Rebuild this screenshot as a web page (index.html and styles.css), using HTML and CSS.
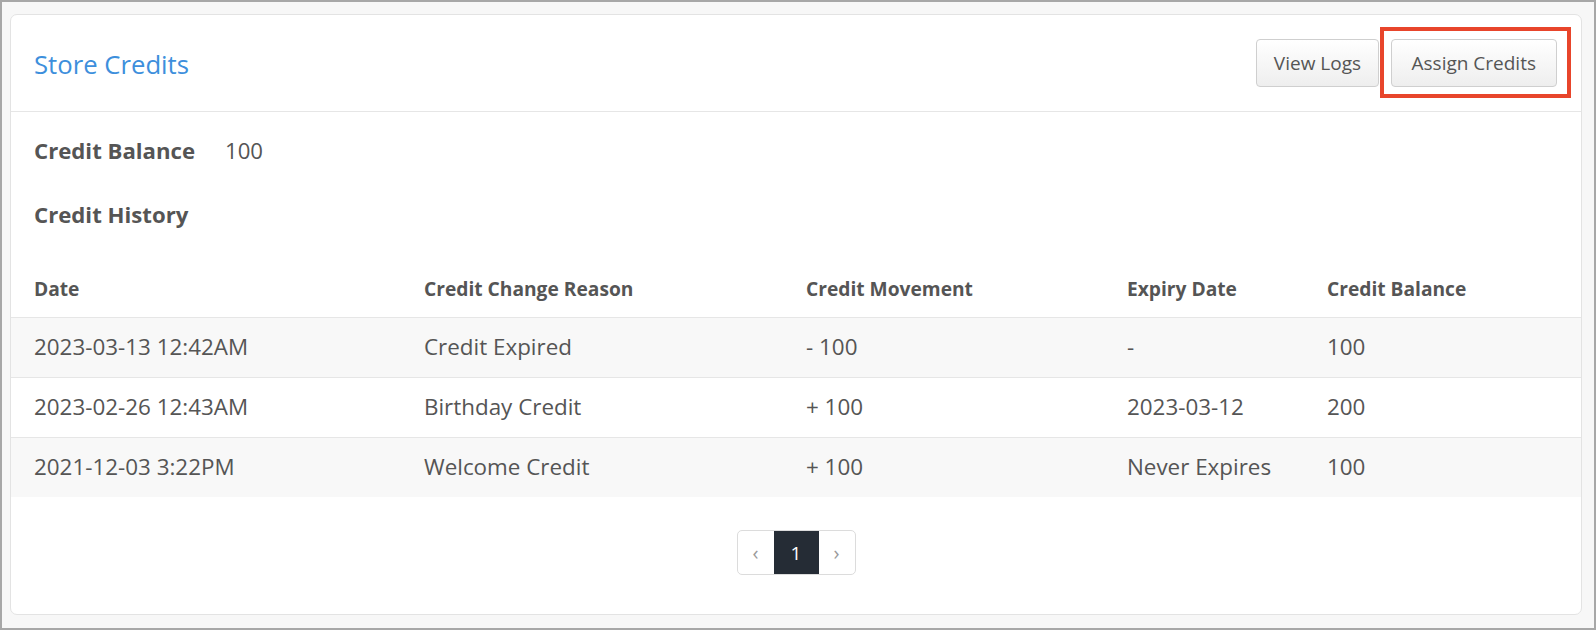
FILE: index.html
```html
<!DOCTYPE html>
<html>
<head>
<meta charset="utf-8">
<link rel="stylesheet" href="styles.css">
</head>
<body>
<div class="frame">
  <div class="card">
    <div class="card-header">
      <h1 class="title">Store Credits</h1>
      <div class="actions">
        <button class="btn">View Logs</button>
        <span class="highlight-wrap">
          <button class="btn btn-wide">Assign Credits</button>
          <span class="highlight"></span>
        </span>
      </div>
    </div>
    <div class="card-body">
      <div class="balance">
        <span class="label">Credit Balance</span>
        <span class="value">100</span>
      </div>
      <h2 class="section-title">Credit History</h2>
    </div>
    <table class="history">
      <colgroup>
        <col class="c1"><col class="c2"><col class="c3"><col class="c4"><col class="c5">
      </colgroup>
      <thead>
        <tr>
          <th>Date</th>
          <th>Credit Change Reason</th>
          <th>Credit Movement</th>
          <th>Expiry Date</th>
          <th>Credit Balance</th>
        </tr>
      </thead>
      <tbody>
        <tr>
          <td>2023-03-13 12:42AM</td>
          <td>Credit Expired</td>
          <td>- 100</td>
          <td>-</td>
          <td>100</td>
        </tr>
        <tr>
          <td>2023-02-26 12:43AM</td>
          <td>Birthday Credit</td>
          <td>+ 100</td>
          <td>2023-03-12</td>
          <td>200</td>
        </tr>
        <tr>
          <td>2021-12-03 3:22PM</td>
          <td>Welcome Credit</td>
          <td>+ 100</td>
          <td>Never Expires</td>
          <td>100</td>
        </tr>
      </tbody>
    </table>
    <div class="pager-row">
      <div class="pager">
        <span class="page nav">&#8249;</span>
        <span class="page active">1</span>
        <span class="page nav">&#8250;</span>
      </div>
    </div>
  </div>
</div>
</body>
</html>
```

FILE: styles.css
```css
* { box-sizing: border-box; }
html, body { margin: 0; padding: 0; }
body {
  font-family: "Open Sans", "Noto Sans", sans-serif;
  color: #555;
  background: #f7f7f7;
}
.frame {
  width: 1596px;
  height: 630px;
  border: 2px solid #a7a7a7;
  background: #f7f7f7;
  padding: 12px 12px 0 8px;
}
.card {
  background: #fff;
  border: 1px solid #e3e3e3;
  border-radius: 7px;
  height: 601px;
}
.card-header {
  display: flex;
  align-items: center;
  justify-content: space-between;
  height: 97px;
  padding: 0 24px 0 23px;
  border-bottom: 1px solid #e6e6e6;
}
.title {
  margin: 3px 0 0;
  font-size: 25.7px;
  font-weight: 400;
  color: #3d8fdc;
  line-height: 34px;
}
.actions {
  display: flex;
  gap: 12px;
  align-items: center;
}
.btn {
  font-family: "Open Sans", "Noto Sans", sans-serif;
  font-size: 19px;
  color: #555;
  height: 48px;
  padding: 0 16.5px;
  border: 1px solid #cfcfcf;
  border-radius: 4px;
  background: linear-gradient(#ffffff, #eeeeee);
}
.btn-wide {
  padding: 0 20px;
}
.highlight-wrap {
  position: relative;
  display: inline-flex;
}
.highlight {
  position: absolute;
  left: -11px;
  top: -12px;
  right: -14px;
  bottom: -11px;
  border: 4.5px solid #e8452b;
}
.card-body {
  padding: 24px 23px 0;
}
.balance {
  display: flex;
  align-items: center;
  line-height: 30px;
  font-size: 22.2px;
}
.label {
  font-weight: 700;
  width: 191px;
}
.section-title {
  margin: 34px 0 0;
  font-size: 22.2px;
  font-weight: 700;
  line-height: 30px;
}
.history {
  width: 100%;
  border-collapse: collapse;
  margin-top: 32px;
  table-layout: fixed;
}
.c1 { width: 390px; }
.c2 { width: 382px; }
.c3 { width: 321px; }
.c4 { width: 200px; }
.history th {
  text-align: left;
  font-size: 19.2px;
  font-weight: 700;
  line-height: 26px;
  padding: 14px 0 15px 23px;
  border-bottom: 1px solid #e6e6e6;
}
.history td {
  font-size: 22.4px;
  line-height: 30px;
  padding: 14px 0 15px 23px;
  border-top: 1px solid #e6e6e6;
}
.history tbody tr:first-child td { border-top: none; }
.history tbody tr:nth-child(odd) { background: #f8f8f8; }
.pager-row {
  display: flex;
  justify-content: center;
  padding-top: 33px;
}
.pager {
  display: flex;
  border: 1px solid #dcdcdc;
  border-radius: 5px;
  height: 45px;
  overflow: hidden;
}
.page {
  display: flex;
  align-items: center;
  justify-content: center;
  height: 43px;
  font-size: 19px;
}
.nav {
  width: 36px;
  color: #9a9a9a;
  font-size: 20px;
}
.active {
  width: 45px;
  background: #252c35;
  color: #fff;
}
```
